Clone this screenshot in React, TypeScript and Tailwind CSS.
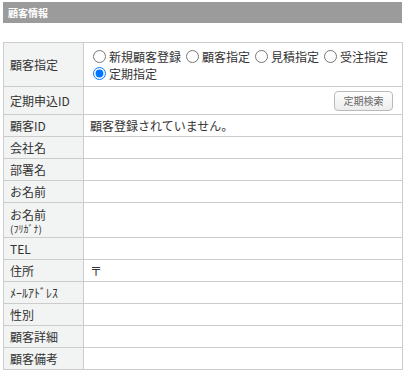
import React from "react";

const font = { fontFamily: '"Noto Sans CJK JP", "Noto Sans", sans-serif' };

function Row({ label, children, h, labelNode }: { label?: string; children?: React.ReactNode; h: string; labelNode?: React.ReactNode }) {
  return (
    <div className={`flex border-b border-[#cccccc] ${h}`}>
      <div className="w-[80px] shrink-0 border-r border-[#cccccc] bg-[#f2f3f3] flex items-center pl-[6px] text-[12px] text-[#333]">
        {labelNode ?? label}
      </div>
      <div className="flex-1 border-r border-[#cccccc] bg-white flex items-center pl-[6px] text-[12px] text-[#333]">
        {children}
      </div>
    </div>
  );
}

function Radio({ label, checked }: { label: string; checked?: boolean }) {
  return (
    <label className="inline-flex items-center mr-[5px] whitespace-nowrap">
      <input type="radio" name="kokyaku" defaultChecked={checked} className="m-0 mr-[3px] w-[13px] h-[13px]" />
      <span>{label}</span>
    </label>
  );
}

export default function App() {
  return (
    <div className="w-[405px] h-[372px] bg-white pl-[3px] pt-[2px]" style={font}>
      <div className="w-[399px] h-[21px] bg-[#9b9b9b] flex items-center pl-[5px] text-white text-[10px] font-bold">
        顧客情報
      </div>
      <div className="mt-[19px] w-[400px] border-t border-l border-[#cccccc]">
        <Row label="顧客指定" h="h-[44px]">
          <div className="flex flex-wrap leading-[17px] pr-[4px] pl-[3px]">
            <Radio label="新規顧客登録" />
            <Radio label="顧客指定" />
            <Radio label="見積指定" />
            <Radio label="受注指定" />
            <Radio label="定期指定" checked />
          </div>
        </Row>
        <Row label="定期申込ID" h="h-[28px]">
          <div className="flex-1 flex justify-end pr-[9px]">
            <button className="w-[59px] h-[20px] rounded-[4px] border border-[#bbbbbb] bg-gradient-to-b from-white to-[#ececec] text-[10px] text-[#666] leading-none">
              定期検索
            </button>
          </div>
        </Row>
        <Row label="顧客ID" h="h-[22px]">顧客登録されていません。</Row>
        <Row label="会社名" h="h-[22px]" />
        <Row label="部署名" h="h-[22px]" />
        <Row label="お名前" h="h-[22px]" />
        <Row
          h="h-[35px]"
          labelNode={
            <div className="flex flex-col">
              <span className="block leading-[17px]">お名前</span>
              <span className="block text-[10px] leading-[12px]">(ﾌﾘｶﾞﾅ)</span>
            </div>
          }
        />
        <Row label="TEL" h="h-[22px]" />
        <Row label="住所" h="h-[22px]">〒</Row>
        <Row label="ﾒｰﾙｱﾄﾞﾚｽ" h="h-[22px]" />
        <Row label="性別" h="h-[22px]" />
        <Row label="顧客詳細" h="h-[22px]" />
        <Row label="顧客備考" h="h-[22px]" />
      </div>
    </div>
  );
}
